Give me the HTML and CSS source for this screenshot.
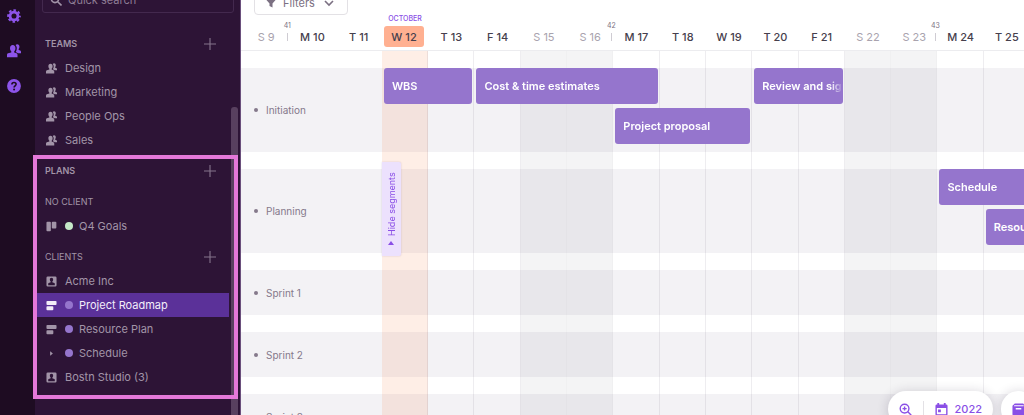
FILE: index.html
```html
<!DOCTYPE html>
<html lang="en">
<head>
<meta charset="utf-8">
<meta name="viewport" content="width=device-width, initial-scale=1">
<title>Project Roadmap</title>
<link rel="stylesheet" href="styles.css">
</head>
<body>
<svg class="sprite" aria-hidden="true">
  <symbol id="people" viewBox="0 0 20 20"><path d="M8.200 1.500c2.500 0 3.900 1.900 3.900 4.400 0 1.900-.7 3.500-1.800 4.400v1.700l3.200 1.300c1 .4 1.500 1.200 1.500 2.200V19H0v-3.500c0-1 .5-1.800 1.500-2.200L6.100 12v-1.700C5 9.400 4.300 7.800 4.300 5.900c0-2.500 1.400-4.400 3.900-4.400z"/><path d="M12.200 1.600C12.900.8 13.800.4 14.700.4c2 0 3.100 1.500 3.100 3.500 0 1.400-.4 2.600-1.100 3.400v1.200l2.200.9c.7.300 1.100.9 1.100 1.600v2.200h-4.200l-3.300-1.700c1-1.600 1.500-3.500 1.500-5.400 0-1.700-.6-3.300-1.800-4.500z"/></symbol>
  <symbol id="client" viewBox="0 0 12 12"><path fill-rule="evenodd" d="M2 .5h8A1.500 1.500 0 0 1 11.500 2v8a1.500 1.500 0 0 1-1.500 1.500H2A1.500 1.500 0 0 1 .5 10V2A1.500 1.500 0 0 1 2 .5zM6 2C4.800 2 4.200 2.900 4.200 4c0 .8.300 1.500.9 1.900v.9L3 7.600c-.4.200-.6.500-.6.900V10h7.200V8.500c0-.4-.2-.7-.6-.9l-2.100-.8v-.9c.6-.4.900-1.100.9-1.900 0-1.100-.6-2-1.800-2z"/></symbol>
  <symbol id="roadmap" viewBox="0 0 12 12"><rect x=".5" y="1" width="11" height="4.400" rx="1"/><rect x=".5" y="6.700" width="7.500" height="4.400" rx="1"/></symbol>
  <symbol id="board" viewBox="0 0 12 12"><rect x=".5" y=".8" width="4.800" height="10.400" rx="1"/><rect x="6.300" y=".8" width="5" height="7.400" rx="1"/></symbol>
  <symbol id="plus" viewBox="0 0 12 12"><path d="M6 0v12M0 6h12" stroke="currentColor" stroke-width="1.100"/></symbol>
</svg>

<div class="app">
  <nav class="rail" aria-label="Main">
    <button class="rail-button" aria-label="Settings"><svg viewBox="0 0 16 16"><g stroke="currentColor" fill="none"><circle cx="8" cy="8" r="4.500" stroke-width="3.200"/><circle cx="8" cy="8" r="6.700" stroke-width="2.200" stroke-dasharray="2.900 2.362" stroke-dashoffset="1.450"/></g></svg></button>
    <button class="rail-button" aria-label="People"><svg><use href="#people"/></svg></button>
    <button class="rail-button" aria-label="Help"><svg viewBox="0 0 16 16"><circle cx="8" cy="8" r="7.900"/><path d="M5.600 6.200C5.600 4.800 6.600 3.900 8 3.900s2.400.8 2.400 2.100c0 1.700-2.300 1.800-2.300 3.600" fill="none" stroke="#1e0c22" stroke-width="1.800"/><circle cx="8.100" cy="12" r="1.150" fill="#1e0c22"/></svg></button>
  </nav>

  <aside class="sidebar">
    <label class="search">
      <svg viewBox="0 0 12 12"><g fill="none" stroke="currentColor" stroke-width="1.600"><circle cx="5" cy="5" r="3.600"/><path d="M7.700 7.700l3.800 3.800"/></g></svg>
      <input type="search" placeholder="Quick search" aria-label="Quick search">
    </label>

    <section class="group">
      <div class="group-head"><h2>TEAMS</h2><button class="add" aria-label="Add team"><svg><use href="#plus"/></svg></button></div>
      <ul>
        <li><a class="item" href="#"><svg><use href="#people"/></svg>Design</a></li>
        <li><a class="item" href="#"><svg><use href="#people"/></svg>Marketing</a></li>
        <li><a class="item" href="#"><svg><use href="#people"/></svg>People Ops</a></li>
        <li><a class="item" href="#"><svg><use href="#people"/></svg>Sales</a></li>
      </ul>
    </section>

    <section class="plans">
      <div class="group-head"><h2>PLANS</h2><button class="add" aria-label="Add plan"><svg><use href="#plus"/></svg></button></div>
      <div class="group">
        <div class="group-head"><h3>NO CLIENT</h3></div>
        <ul>
          <li><a class="item" href="#"><svg><use href="#board"/></svg><span class="dot dot-green"></span>Q4 Goals</a></li>
        </ul>
      </div>
      <div class="group">
        <div class="group-head"><h3>CLIENTS</h3><button class="add" aria-label="Add client"><svg><use href="#plus"/></svg></button></div>
        <ul>
          <li><a class="item" href="#"><svg><use href="#client"/></svg>Acme Inc</a></li>
          <li><a class="item item-current" href="#" aria-current="page"><svg><use href="#roadmap"/></svg><span class="dot"></span>Project Roadmap</a></li>
          <li><a class="item" href="#"><svg><use href="#roadmap"/></svg><span class="dot"></span>Resource Plan</a></li>
          <li><a class="item" href="#"><svg viewBox="0 0 12 12"><path d="M4.500 3.500L7.500 6l-3 2.500z"/></svg><span class="dot"></span>Schedule</a></li>
          <li><a class="item" href="#"><svg><use href="#client"/></svg>Bostn Studio (3)</a></li>
        </ul>
      </div>
    </section>
    <div class="scrollbar"></div>
  </aside>

  <main class="timeline">
    <div class="toolbar">
      <button class="filters">
        <svg viewBox="0 0 12 12"><path d="M1 1h10v1.500L7.500 6.500v4l-3-1.500V6.500L1 2.500z" fill="currentColor"/></svg>
        Filters
        <svg viewBox="0 0 12 12"><path d="M2 4l4 4 4-4" fill="none" stroke="currentColor" stroke-width="1.600"/></svg>
      </button>
    </div>

    <div class="days">
      <span class="day off">S 9</span>
      <span class="day"><span class="week">41</span>M 10</span>
      <span class="day">T 11</span>
      <span class="day"><span class="month">OCTOBER</span><span class="today">W 12</span></span>
      <span class="day">T 13</span>
      <span class="day">F 14</span>
      <span class="day off">S 15</span>
      <span class="day off">S 16</span>
      <span class="day"><span class="week">42</span>M 17</span>
      <span class="day">T 18</span>
      <span class="day">W 19</span>
      <span class="day">T 20</span>
      <span class="day">F 21</span>
      <span class="day off">S 22</span>
      <span class="day off">S 23</span>
      <span class="day"><span class="week">43</span>M 24</span>
      <span class="day">T 25</span>
    </div>

    <div class="chart">
      <div class="columns" aria-hidden="true">
        <i class="col col-today"></i><i class="col"></i><i class="col"></i><i class="col col-off"></i><i class="col col-off"></i><i class="col"></i><i class="col"></i><i class="col"></i><i class="col"></i><i class="col"></i><i class="col col-off"></i><i class="col col-off"></i><i class="col"></i><i class="col"></i>
      </div>

      <section class="phase phase-tall">
        <h4>Initiation</h4>
        <button class="bar lane-1 from-4 span-2"><span>WBS</span></button>
        <button class="bar lane-1 from-6 span-4"><span>Cost &amp; time estimates</span></button>
        <button class="bar lane-1 from-12 span-2"><span>Review and sign-off</span></button>
        <button class="bar lane-2 from-9 span-3"><span>Project proposal</span></button>
      </section>
      <section class="phase phase-tall">
        <h4>Planning</h4>
        <button class="bar lane-1 from-16 span-2"><span>Schedule</span></button>
        <button class="bar lane-2 from-17 span-1"><span>Resources</span></button>
        <button class="segments"><svg viewBox="0 0 6 6"><path d="M0 1h6L3 5z" fill="currentColor"/></svg>Hide segments</button>
      </section>
      <section class="phase"><h4>Sprint 1</h4></section>
      <section class="phase"><h4>Sprint 2</h4></section>
      <section class="phase"><h4>Sprint 3</h4></section>
    </div>

    <div class="floating">
      <div class="pill">
        <button aria-label="Zoom in"><svg viewBox="0 0 14 14"><g fill="none" stroke="currentColor" stroke-width="1.500"><circle cx="6" cy="6" r="4.700"/><path d="M9.500 9.500l3.700 3.700M6 3.800v4.400M3.800 6h4.400"/></g></svg></button>
        <button class="year"><svg viewBox="0 0 14 14"><path fill-rule="evenodd" d="M2.500 0h2v1.500h5V0h2v1.500h.5a1.500 1.500 0 0 1 1.500 1.500V12a1.500 1.500 0 0 1-1.500 1.500H2A1.500 1.500 0 0 1 .5 12V3A1.500 1.500 0 0 1 2 1.500h.5zM2 5.500V12h10V5.500zM3.300 7h3v3h-3z" fill="currentColor"/></svg>2022</button>
      </div>
      <div class="pill">
        <button aria-label="Library"><svg viewBox="0 0 14 14"><path fill-rule="evenodd" d="M3 .5h9l1.500 2v9.500a1.500 1.500 0 0 1-1.500 1.500H2A1.500 1.500 0 0 1 .5 12V3zM2 3.500h10.500v-1h-10zM4 5.500v1.500h6V5.500z" fill="currentColor"/></svg></button>
      </div>
    </div>
  </main>
</div>
</body>
</html>
```
FILE: styles.css
```css
* {
  box-sizing: border-box;
}

body {
  margin: 0;
  font: 11px/16px Inter, "Liberation Sans", sans-serif;
  color: #46404d;
  overflow: hidden;
}

button {
  border: 0;
  padding: 0;
  background: none;
  color: inherit;
  font: inherit;
}

a {
  color: inherit;
  text-decoration: none;
}

ul {
  margin: 0;
  padding: 0;
  list-style: none;
}

h2,
h3,
h4 {
  margin: 0;
  font-size: 9px;
  font-weight: 400;
}

svg {
  display: block;
  flex: none;
  width: 12px;
  height: 12px;
  fill: currentColor;
}

.sprite {
  display: none;
}

.app {
  display: flex;
  height: 100vh;
}

/* Icon rail */

.rail {
  flex: none;
  display: flex;
  flex-direction: column;
  gap: 21px;
  width: 35px;
  padding: 9px 0 0 7px;
  background: #1e0c22;
  color: #8d54ea;
}

.rail-button {
  width: 14px;
  height: 14px;
}

.rail-button svg {
  width: 14px;
  height: 14px;
}

/* Sidebar */

.sidebar {
  position: relative;
  z-index: 3;
  flex: none;
  width: 206px;
  background: #2d1436;
  border-right: 1px solid #6a4f7c;
  color: #a294a8;
}

.search {
  display: flex;
  align-items: center;
  gap: 6px;
  height: 26px;
  margin: -13px 6px 19px 7px;
  padding-left: 7px;
  border: 1px solid #43294e;
  border-radius: 3px;
}

.search input {
  flex: 1;
  min-width: 0;
  padding: 0;
  border: 0;
  outline: 0;
  background: none;
  color: inherit;
  font: inherit;
}

.search input::placeholder {
  color: #8d7c94;
}

.group-head {
  display: flex;
  align-items: center;
  justify-content: space-between;
  height: 24px;
  padding: 0 24px 0 10px;
}

.group-head h2 {
  font-weight: 600;
}

.add {
  color: #85758c;
}

.item {
  display: flex;
  align-items: center;
  height: 24px;
  margin: 0 11px 0 2px;
  padding-left: 9px;
}

.item svg {
  width: 11px;
  height: 11px;
  margin-right: 8px;
}

.dot {
  width: 8px;
  height: 8px;
  margin-right: 6px;
  border-radius: 50%;
  background: #9575cd;
}

.dot-green {
  background: #c5e8c8;
}

.item-current {
  background: #5b3199;
  color: #f3edf9;
}

.plans {
  position: relative;
  margin-top: 7px;
}

.plans .group {
  margin-top: 7px;
}

.plans::after {
  content: "";
  position: absolute;
  z-index: 2;
  inset: -4px 2px -10px -2px;
  border: 4px solid #e478d9;
  pointer-events: none;
}

.scrollbar {
  position: absolute;
  top: 107px;
  right: 2px;
  bottom: 0;
  width: 7px;
  border-radius: 3px 3px 0 0;
  background: #58405f;
}

/* Timeline */

.timeline {
  position: relative;
  flex: 1;
  min-width: 0;
  display: flex;
  flex-direction: column;
  overflow: hidden;
  background: #fff;
}

.toolbar {
  margin-top: -10px;
  padding-left: 13px;
}

.filters {
  display: flex;
  align-items: center;
  gap: 6px;
  height: 25px;
  padding: 0 12px 0 10px;
  border: 1px solid #e3e1e5;
  border-radius: 4px;
  color: #7b7082;
}

.filters svg:last-child {
  margin-left: 2px;
}

.days,
.columns,
.phase {
  display: grid;
  grid-template-columns: repeat(17, minmax(0, 1fr));
  margin-right: -6px;
  padding-left: 2px;
}

.days {
  height: 36px;
  padding-top: 11px;
  border-bottom: 1px solid #ececef;
}

.day {
  position: relative;
  height: 21px;
  line-height: 22px;
  text-align: center;
  font-weight: 500;
}

.off {
  color: #a9a3ae;
  font-weight: 400;
}

.today {
  display: block;
  height: 21px;
  margin: 0 4px 0 2px;
  border-radius: 3px;
  background: #ffb091;
}

.week,
.month {
  position: absolute;
  font-size: 7px;
  line-height: 8px;
  font-weight: 400;
  color: #7b7082;
}

.week {
  top: -4px;
  left: -10px;
  width: 16px;
}

.week::after {
  content: "";
  display: block;
  width: 1px;
  height: 8px;
  margin: 3px 0 0 8px;
  background: #cfccd3;
}

.month {
  top: -11px;
  left: 0;
  right: 0;
  font-weight: 500;
  color: #8a4fe6;
}

.chart {
  position: relative;
  flex: 1;
  min-height: 0;
  padding-top: 17px;
}

.columns {
  position: absolute;
  z-index: 1;
  inset: 0;
  pointer-events: none;
}

.col {
  border-right: 1px solid rgba(40, 30, 60, 0.08);
}

.col-today {
  grid-column-start: 4;
  background: rgba(250, 125, 60, 0.13);
}

.col-off {
  background: rgba(40, 30, 60, 0.05);
  border-right-color: rgba(40, 30, 60, 0.02);
}

.phase {
  position: relative;
  grid-template-rows: 45px;
  margin-bottom: 17px;
  background: #f3f2f5;
}

.phase-tall {
  grid-template-rows: 36px 36px;
  row-gap: 4px;
  padding-bottom: 8px;
}

.phase h4 {
  grid-area: 1 / 1 / -1 / 4;
  align-self: center;
  display: flex;
  align-items: center;
  gap: 8px;
  padding-left: 11px;
  font-size: 10px;
  color: #85798b;
}

.phase-tall h4 {
  padding-top: 8px;
}

.phase h4::before {
  content: "";
  width: 4px;
  height: 4px;
  border-radius: 50%;
  background: currentColor;
}

.bar {
  z-index: 2;
  display: flex;
  align-items: center;
  margin: 0 2px;
  padding-left: 8px;
  overflow: hidden;
  border-radius: 3px;
  background: #9575cd;
  color: #fff;
  font-weight: 600;
  white-space: nowrap;
}

.bar span {
  flex: 1;
  min-width: 0;
  overflow: hidden;
  text-align: left;
  mask-image: linear-gradient(to left, transparent, #000 12px);
}

.lane-1 { grid-row: 1; }
.lane-2 { grid-row: 2; }

.from-4 { grid-column-start: 4; }
.from-6 { grid-column-start: 6; }
.from-9 { grid-column-start: 9; }
.from-12 { grid-column-start: 12; }
.from-16 { grid-column-start: 16; }
.from-17 { grid-column-start: 17; }

.span-1 { grid-column-end: span 1; }
.span-2 { grid-column-end: span 2; }
.span-3 { grid-column-end: span 3; }
.span-4 { grid-column-end: span 4; }

.from-16,
.from-17 {
  margin-right: 0;
  border-radius: 3px 0 0 3px;
}

.from-17 span {
  overflow: visible;
  mask-image: none;
}

.segments {
  position: absolute;
  z-index: 2;
  top: -7px;
  left: 0;
  grid-column: 4;
  display: flex;
  align-items: center;
  gap: 4px;
  width: 19px;
  height: 94px;
  padding: 10px 0;
  border-radius: 2px 0 0 2px;
  background: #ece1fd;
  box-shadow: 0 0 2px rgba(60, 30, 100, 0.2);
  color: #8a4fe6;
  font-size: 9px;
  line-height: 19px;
  writing-mode: vertical-rl;
  transform: rotate(180deg);
}

.segments svg {
  width: 6px;
  height: 6px;
}

/* Floating controls */

.floating {
  position: absolute;
  z-index: 3;
  right: -12px;
  bottom: -12px;
  display: flex;
  gap: 8px;
}

.pill {
  display: flex;
  align-items: center;
  height: 36px;
  padding: 0 11px;
  border-radius: 18px;
  background: #fff;
  box-shadow: 0 1px 12px rgba(40, 30, 60, 0.2);
  color: #8a4fe6;
  font-weight: 500;
}

.pill svg {
  width: 13px;
  height: 13px;
}

.pill .year {
  display: flex;
  align-items: center;
  gap: 7px;
  margin-left: 11px;
  padding-left: 11px;
  border-left: 1px solid #e3e1e5;
}
```
